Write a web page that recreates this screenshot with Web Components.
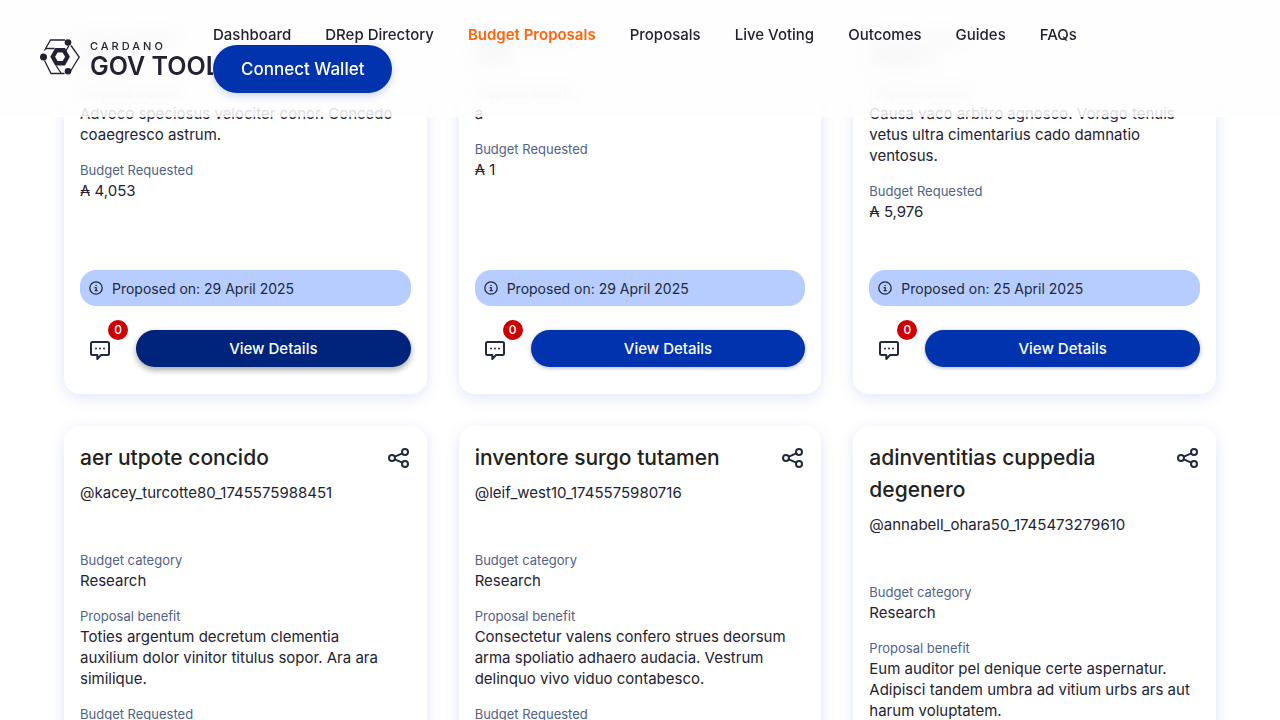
<!DOCTYPE html>
<html lang="en">
<head>
<meta charset="utf-8">
<meta name="viewport" content="width=device-width, initial-scale=1">
<title>Budget Proposals - GovTool</title>
<style>
  html, body { margin: 0; height: 100%; }
  body { background: #fff; color: #242232; font: 400 15px/21px Inter, "Open Sans", sans-serif; }
</style>
</head>
<body>
<gov-app>
  <gov-header slot="header">
    <nav-link href="#dashboard">Dashboard</nav-link>
    <nav-link href="#dreps">DRep Directory</nav-link>
    <nav-link href="#budget" current>Budget Proposals</nav-link>
    <nav-link href="#proposals">Proposals</nav-link>
    <nav-link href="#voting">Live Voting</nav-link>
    <nav-link href="#outcomes">Outcomes</nav-link>
    <nav-link href="#guides">Guides</nav-link>
    <nav-link href="#faqs">FAQs</nav-link>
  </gov-header>

  <proposal-card cut category="Research" amount="4,053" date="29 April 2025" active>Advoco speciosus velociter conor. Concedo coaegresco astrum.</proposal-card>
  <proposal-card cut category="None" amount="1" date="29 April 2025">a</proposal-card>
  <proposal-card cut category="Research" amount="5,976" date="25 April 2025">Causa vaco arbitro agnosco. Vorago tenuis vetus ultra cimentarius cado damnatio ventosus.</proposal-card>

  <proposal-card category="Research" amount="4,120" date="25 April 2025">
    <span slot="title">aer utpote concido</span>
    <span slot="author">@kacey_turcotte80_1745575988451</span>
    Toties argentum decretum clementia<br>auxilium dolor vinitor titulus sopor. Ara ara<br>similique.
  </proposal-card>
  <proposal-card category="Research" amount="2,310" date="25 April 2025">
    <span slot="title">inventore surgo tutamen</span>
    <span slot="author">@leif_west10_1745575980716</span>
    Consectetur valens confero strues deorsum arma spoliatio adhaero audacia. Vestrum delinquo vivo viduo contabesco.
  </proposal-card>
  <proposal-card category="Research" amount="7,402" date="24 April 2025">
    <span slot="title">adinventitias cuppedia degenero</span>
    <span slot="author">@annabell_ohara50_1745473279610</span>
    Eum auditor pel denique certe aspernatur. Adipisci tandem umbra ad vitium urbs ars aut harum voluptatem.
  </proposal-card>
</gov-app>

<script>
const define = (name, html, setup) => {
  const template = document.createElement('template');
  template.innerHTML = html;
  customElements.define(name, class extends HTMLElement {
    constructor() {
      super();
      this.attachShadow({ mode: 'open' }).append(template.content.cloneNode(true));
    }
    connectedCallback() { if (setup) setup(this, this.shadowRoot); }
  });
};

define('gov-logo', `
<style>
  :host { display: flex; align-items: center; gap: 10px; color: #242232; white-space: nowrap; }
  svg { flex: none; display: block; }
  .words { display: flex; flex-direction: column; padding-top: 4px; }
  .top { font-size: 11px; line-height: 15px; font-weight: 500; letter-spacing: 3px; }
  .main { font-size: 25px; line-height: 24px; font-weight: 600; }
</style>
<svg width="40" height="36" viewBox="0 0 40 36" fill="none" stroke="currentColor" stroke-width="1.3" aria-hidden="true">
  <path d="M25 1H10.500L4.500 11.500M31 6.500L39.200 18L30 33M29 6.500L25.500 12.500M6 9.500H14.500M4.500 21.500L11 34.500H24.500M16 26.500L21 34"/>
  <circle cx="28" cy="3.500" r="3.300" fill="currentColor" stroke="none"/>
  <circle cx="3.500" cy="18" r="3.500" fill="currentColor" stroke="none"/>
  <circle cx="28" cy="32.300" r="3.300" fill="currentColor" stroke="none"/>
  <path fill="currentColor" stroke="none" fill-rule="evenodd" d="M15.200 9h9.800l4.900 8.800-4.900 8.800h-9.800l-4.900-8.800zM17.600 13.500l-2.500 4.300 2.500 4.300h5l2.500-4.300-2.500-4.300z"/>
</svg>
<span class="words"><span class="top">CARDANO</span><span class="main">GOV TOOL</span></span>
`);

define('nav-link', `
<style>
  :host { display: block; }
  a { display: block; color: #242232; font-weight: 500; line-height: 21px; text-decoration: none; white-space: nowrap; }
  :host([current]) a { color: #ff640a; font-weight: 600; }
</style>
<a><slot></slot></a>
`, (el, root) => {
  const a = root.querySelector('a');
  a.href = el.getAttribute('href');
  if (el.hasAttribute('current')) a.setAttribute('aria-current', 'page');
});

define('gov-header', `
<style>
  :host { display: block; position: relative; }
  :host::before { content: ""; position: absolute; inset: 0 0 12px; backdrop-filter: blur(10px); }
  :host::after { content: ""; position: absolute; inset: 0; background: rgba(254, 254, 254, .85); }
  header { position: relative; z-index: 1; display: flex; align-items: center; padding: 24px 40px; }
  gov-logo { flex: none; width: 173px; overflow: hidden; box-sizing: border-box; padding-bottom: 4px; }
  .side { display: flex; flex-direction: column; align-items: flex-start; }
  nav { display: flex; gap: 34px; }
  button { border: 0; border-radius: 24px; height: 48px; padding: 0 28px; background: #0033ad; color: #fff;
    font: 500 17px/24px Inter, "Open Sans", sans-serif; box-shadow: 0 3px 8px rgba(0, 51, 173, .2); }
</style>
<header>
  <gov-logo></gov-logo>
  <div class="side">
    <nav aria-label="Main"><slot></slot></nav>
    <button type="button">Connect Wallet</button>
  </div>
</header>
`);

define('proposal-field', `
<style>
  :host { display: block; }
  .label { color: #506288; font-size: 13px; line-height: 19px; }
  .value { line-height: 21px; }
</style>
<div class="label"><slot name="label"></slot></div>
<div class="value"><slot></slot></div>
`);

define('proposal-card', `
<style>
  :host { display: flex; flex-direction: column; box-sizing: border-box; min-width: 0; padding: 16px 16px 24px;
    border-radius: 16px; background: #fff; box-shadow: 0 4px 15px rgba(47, 80, 220, .14); }
  :host([cut]) { padding-top: 28px; border-radius: 0 0 16px 16px; }
  :host([cut]) .head, :host([cut]) .author { display: none; }
  .head { display: flex; justify-content: space-between; gap: 16px; }
  h2 { margin: 0; color: #212121; font-size: 21px; line-height: 32px; font-weight: 500; }
  button { border: 0; padding: 0; background: none; color: #212a3d; font: inherit; }
  svg { display: block; fill: none; stroke: currentColor; stroke-width: 2; stroke-linecap: round; stroke-linejoin: round; }
  .share { flex: none; width: 24px; height: 32px; }
  .author { margin: 8px 0 48px; }
  .fields { display: flex; flex-direction: column; gap: 16px; padding-bottom: 48px; }
  .date { display: flex; align-items: center; gap: 8px; margin-top: auto; height: 36px; padding: 0 8px;
    border-radius: 16px; background: #b7ccff; color: #212a3d; font-size: 14px; }
  .info { stroke-width: 1.3; }
  .actions { display: flex; align-items: flex-start; gap: 16px; padding-top: 24px; height: 40px; }
  .comment { position: relative; flex: none; display: grid; place-items: center; width: 40px; height: 40px; }
  .badge { position: absolute; top: -10px; right: -8px; width: 20px; height: 20px; border-radius: 10px;
    background: #cc0000; color: #fff; font-size: 12px; line-height: 20px; font-weight: 500; text-align: center; }
  .view { flex: 1; height: 37px; border-radius: 19px; background: #0033ad; color: #fff; font-weight: 500;
    box-shadow: 0 1px 4px rgba(0, 0, 0, .3); }
  :host([active]) .view { background: #00247b; box-shadow: 0 3px 6px rgba(0, 0, 0, .35); }
</style>
<div class="head">
  <h2><slot name="title"></slot></h2>
  <button class="share" type="button" aria-label="Share">
    <svg width="24" height="24" viewBox="0 0 24 24"><circle cx="5" cy="12" r="3"/><circle cx="18" cy="6" r="3"/><circle cx="18" cy="18" r="3"/><path d="M7.800 10.700L15.300 7.300M7.800 13.300L15.300 16.700"/></svg>
  </button>
</div>
<div class="author"><slot name="author"></slot></div>
<div class="fields">
  <proposal-field><span slot="label">Budget category</span><span class="category"></span></proposal-field>
  <proposal-field><span slot="label">Proposal benefit</span><slot></slot></proposal-field>
  <proposal-field><span slot="label">Budget Requested</span><span class="amount"></span></proposal-field>
</div>
<div class="date">
  <svg class="info" width="16" height="16" viewBox="0 0 16 16"><circle cx="8" cy="8" r="6.200"/><path d="M7.200 7.700H8.200V10.600M7.200 10.700H9.200"/><circle cx="8" cy="5.400" r=".4" fill="currentColor" stroke-width=".5"/></svg>
  <span class="on"></span>
</div>
<div class="actions">
  <button class="comment" type="button" aria-label="Comments">
    <svg width="24" height="24" viewBox="0 0 24 24"><path d="M4.500 4h15a1.500 1.500 0 0 1 1.500 1.500v10a1.500 1.500 0 0 1-1.500 1.500H13L9.300 21V17H4.500a1.500 1.500 0 0 1-1.500-1.500v-10A1.500 1.500 0 0 1 4.500 4z"/><path d="M8 10.500h.01M12 10.500h.01M16 10.500h.01"/></svg>
    <span class="badge">0</span>
  </button>
  <button class="view" type="button">View Details</button>
</div>
`, (el, root) => {
  root.querySelector('.category').textContent = el.getAttribute('category');
  root.querySelector('.amount').textContent = '₳ ' + el.getAttribute('amount');
  root.querySelector('.on').textContent = 'Proposed on: ' + el.getAttribute('date');
});

define('gov-app', `
<style>
  :host { display: block; position: relative; height: 100vh; overflow: hidden; background: #fff; }
  .bar { position: absolute; inset: 0 0 auto; z-index: 2; }
  main { display: grid; grid-template-columns: repeat(3, minmax(0, 1fr)); gap: 32px; padding: 0 64px 32px; }
</style>
<div class="bar"><slot name="header"></slot></div>
<main><slot></slot></main>
`);
</script>
</body>
</html>
